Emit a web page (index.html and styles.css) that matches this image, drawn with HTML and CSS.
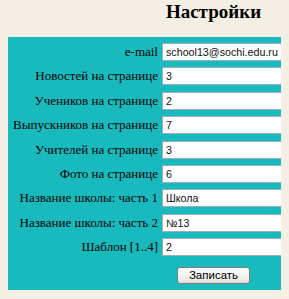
FILE: index.html
```
<!DOCTYPE html>
<html>
<head>
	<title>Настройки</title>
	<meta charset="utf-8">
	<link rel="stylesheet" href="styles.css">
</head>
<body>
	<div class="page">
		<h2>Настройки</h2>
		<form class="panel">
			<label>e-mail</label>
			<input type="text" value="school13@sochi.edu.ru" name="email">

			<label>Новостей на странице</label>
			<input type="text" value="3" name="news">

			<label>Учеников на странице</label>
			<input type="text" value="2" name="pupils">

			<label>Выпускников на странице</label>
			<input type="text" value="7" name="graduates">

			<label>Учителей на странице</label>
			<input type="text" value="3" name="teachers">

			<label>Фото на странице</label>
			<input type="text" value="6" name="photos">

			<label>Название школы: часть 1</label>
			<input type="text" value="Школа" name="title1">

			<label>Название школы: часть 2</label>
			<input type="text" value="№13" name="title2">

			<label>Шаблон [1..4]</label>
			<input type="text" value="2" name="template">

			<div class="buttons">
				<button type="button">Записать</button>
			</div>
		</form>
	</div>
</body>
</html>
```

FILE: styles.css
```
html{
	overflow: hidden;
}
body{
	margin: 0 8px;
	background: #f3efe4;
	font-family: "Liberation Serif", "Times New Roman", serif;
	font-size: 13px;
	color: #000;
}

.page{
	width: 411px;
}

h2{
	margin: 0 0 14px;
	font-size: 19px;
	line-height: 23px;
	text-align: center;
}

.panel{
	display: grid;
	grid-template-columns: 150px 123px 1fr;
	column-gap: 4px;
	row-gap: 6.4px;
	align-items: center;
	padding: 6px 0 6px;
	background: #18babd;
}
.panel label{
	grid-column: 1;
	text-align: right;
	line-height: 18px;
}
.panel input{
	grid-column: 2;
	box-sizing: border-box;
	height: 18px;
	width: 123px;
	margin: 0;
	padding: 0 2px 0 3px;
	border: 1px solid #a3adb8;
	background: #fff;
	font-family: "Liberation Sans", Arial, sans-serif;
	font-size: 10.7px;
	color: #111;
	outline: none;
}

.buttons{
	grid-column: 1 / -1;
	text-align: center;
	padding-top: 4px;
}
.buttons button{
	box-sizing: border-box;
	width: 73px;
	height: 17px;
	padding: 0;
	border: 1px solid #7a7f86;
	border-radius: 3px;
	background: linear-gradient(#ffffff, #ecebe6 80%, #d8d6cf);
	font-family: "Liberation Sans", Arial, sans-serif;
	font-size: 11.5px;
	color: #000;
}
```
